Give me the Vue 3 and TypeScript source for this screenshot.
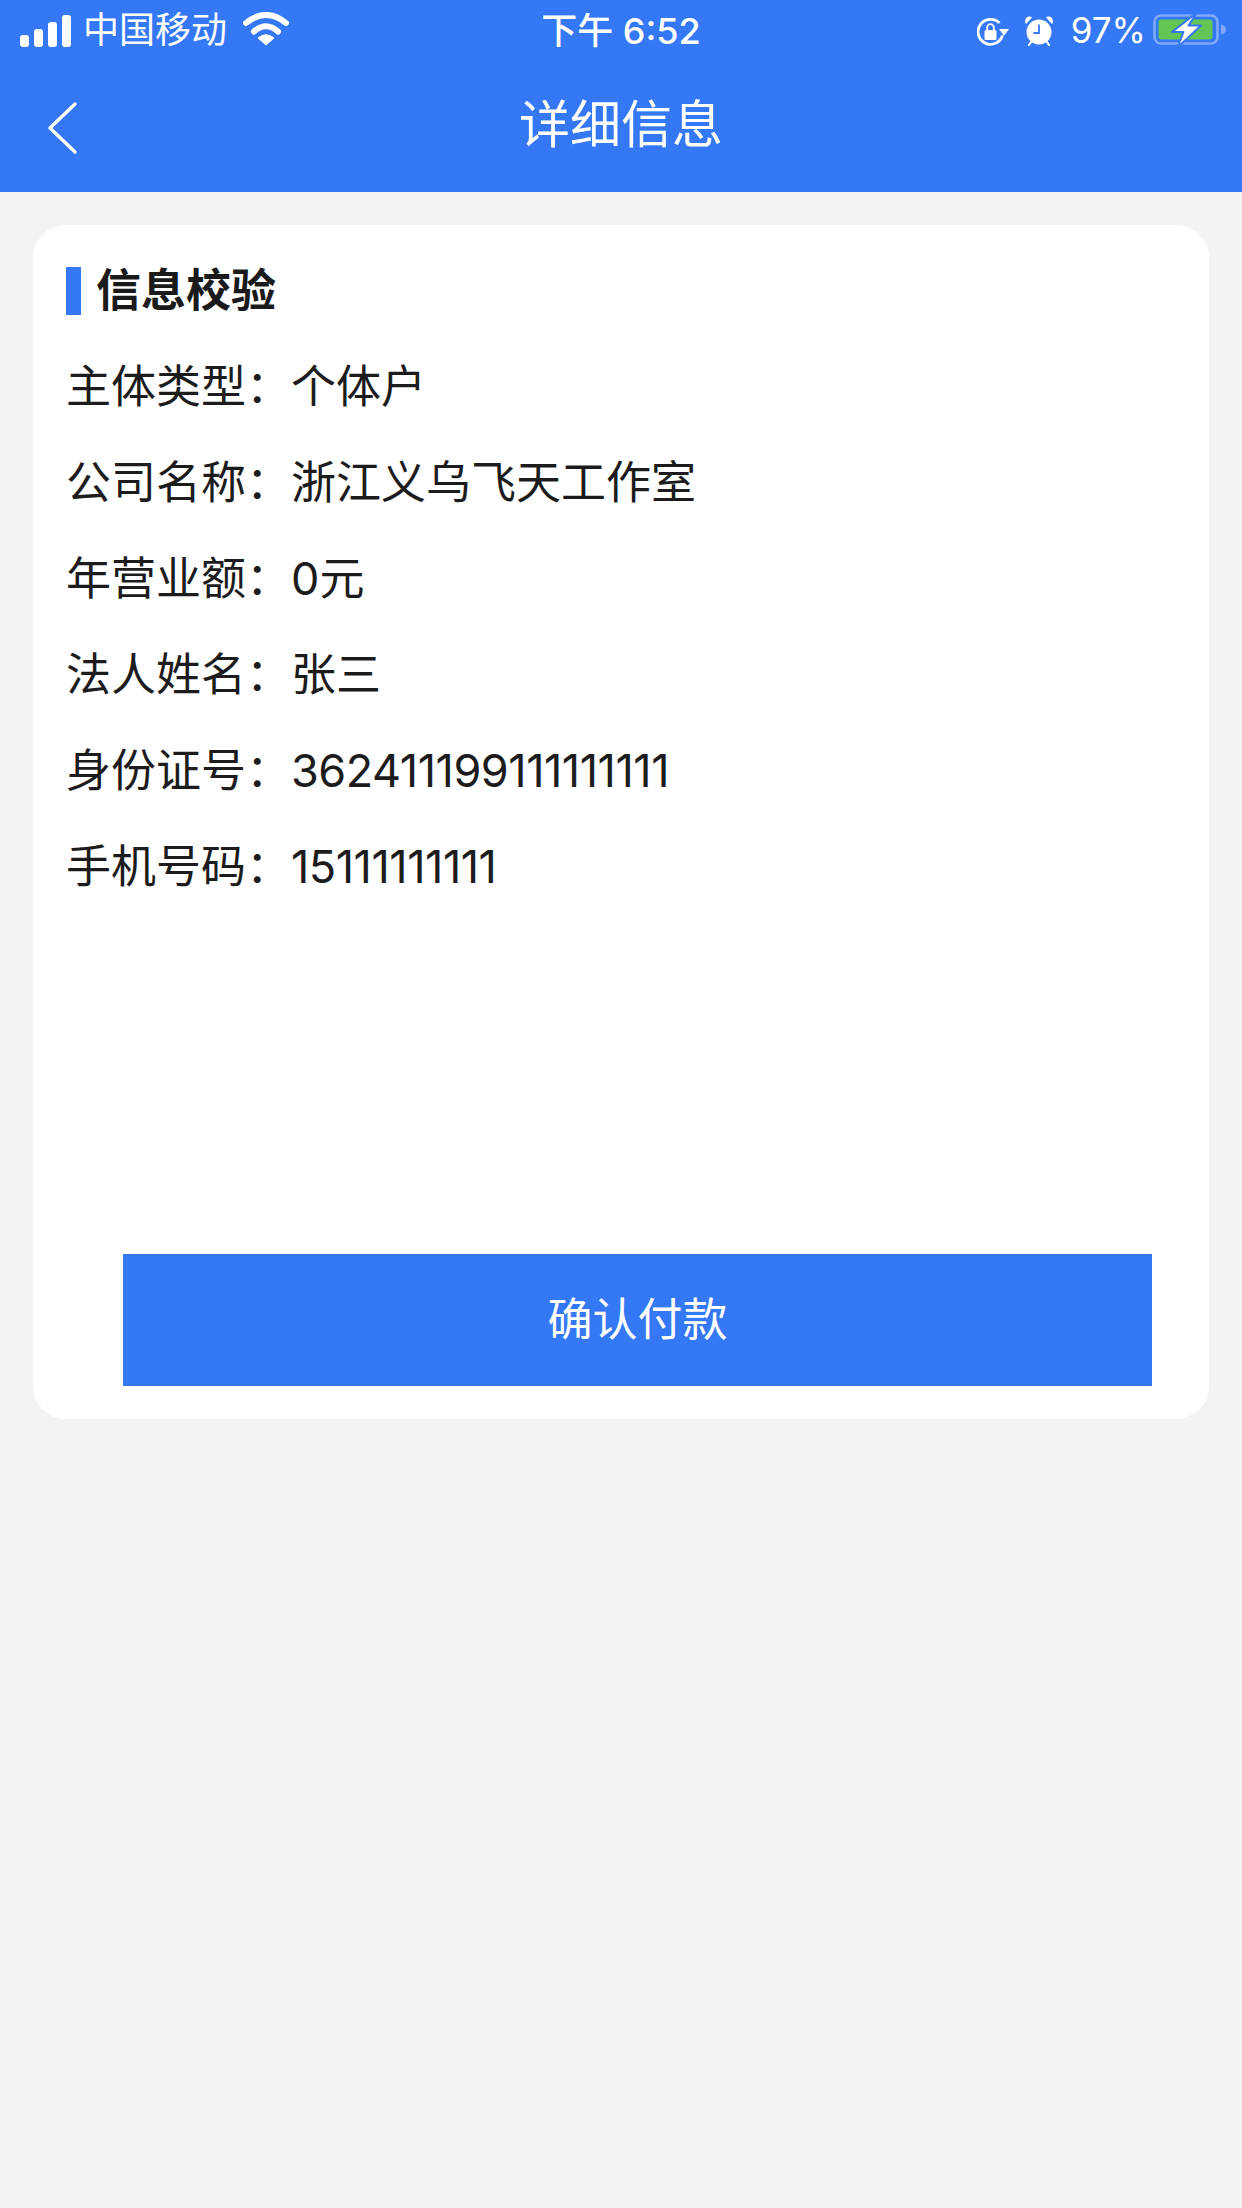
<template>
  <div class="page">
    <header class="top">
      <div class="status-bar">
        <div class="status-left">
          <div class="signal">
            <i v-for="h in signalBars" :key="h" :style="{ height: h + 'px' }"></i>
          </div>
          <span class="carrier">中国移动</span>
          <svg class="wifi" width="46" height="34" viewBox="0 0 46 34">
            <path d="M3 11 Q23 -5 43 11" fill="none" stroke="#fff" stroke-width="6" stroke-linecap="round" />
            <path d="M11 19.5 Q23 9 35 19.5" fill="none" stroke="#fff" stroke-width="6" stroke-linecap="round" />
            <path d="M23 33 L15 26 Q23 19.5 31 26 Z" fill="#fff" stroke="#fff" stroke-width="1" stroke-linejoin="round" />
          </svg>
        </div>
        <div class="status-time">下午 6:52</div>
        <div class="status-right">
          <svg class="lock" width="32" height="28" viewBox="0 0 32 28">
            <path d="M22.5 5 A12.5 12.5 0 1 0 25.5 17.5" fill="none" stroke="#fff" stroke-width="2.8" />
            <path d="M22 11 L32 11 L27 18 Z" fill="#fff" />
            <rect x="7.5" y="12" width="12" height="10" rx="1.5" fill="#fff" />
            <path d="M10.2 12 V9.5 A3.3 3.3 0 0 1 16.8 9.5 V12" fill="none" stroke="#fff" stroke-width="1.8" />
          </svg>
          <svg class="alarm" width="28" height="30" viewBox="0 0 28 30">
            <circle cx="14" cy="16" r="12.5" fill="#fff" />
            <path d="M1 7 L6 1.5 Q1.5 0.5 1 4 Z M27 7 L22 1.5 Q26.5 0.5 27 4 Z" fill="#fff" stroke="#fff" stroke-width="1.5" stroke-linejoin="round" />
            <path d="M6 26 L4 29 M22 26 L24 29" stroke="#fff" stroke-width="2.2" stroke-linecap="round" />
            <path d="M14 8.5 V17 H8.5" fill="none" stroke="#3578f6" stroke-width="1.8" />
          </svg>
          <span class="percent">97%</span>
          <svg class="battery" width="74" height="36" viewBox="0 0 74 36">
            <rect x="1.5" y="3.5" width="63" height="28" rx="6.5" fill="none" stroke="#7fa8f8" stroke-width="2.6" />
            <rect x="5.5" y="7.5" width="54" height="20" rx="3" fill="#62c554" />
            <path d="M68 12.5 Q73 13.5 73 17.5 Q73 21.5 68 22.5 Z" fill="#7fa8f8" />
            <path d="M44 0.5 L19 20 H30.5 L24.5 35.5 L48 13.5 H35.5 Z" fill="#fff" stroke="#3578f6" stroke-width="2" stroke-linejoin="round" />
          </svg>
        </div>
      </div>
      <div class="nav-bar">
        <svg class="back" width="34" height="54" viewBox="0 0 34 54">
          <path d="M30 3 L5 27 L30 51" fill="none" stroke="#fff" stroke-width="3.4" stroke-linecap="round" stroke-linejoin="round" />
        </svg>
        <h1 class="nav-title">详细信息</h1>
      </div>
    </header>

    <main class="content">
      <section class="card">
        <h2 class="card-title">信息校验</h2>
        <dl class="info-list">
          <div v-for="row in rows" :key="row.label" class="info-row">
            <dt>{{ row.label }}：</dt>
            <dd :class="{ 'is-number': row.numeric }">{{ row.value }}</dd>
          </div>
        </dl>
        <button class="confirm" type="button">确认付款</button>
      </section>
    </main>
  </div>
</template>

<script setup lang="ts">
interface InfoRow {
  label: string
  value: string
  numeric?: boolean
}

const signalBars: number[] = [12, 18, 25, 32]

const rows: InfoRow[] = [
  { label: '主体类型', value: '个体户' },
  { label: '公司名称', value: '浙江义乌飞天工作室' },
  { label: '年营业额', value: '0元' },
  { label: '法人姓名', value: '张三' },
  { label: '身份证号', value: '362411199111111111', numeric: true },
  { label: '手机号码', value: '15111111111', numeric: true }
]
</script>

<style>
html,
body {
  margin: 0;
  background: #f3f3f3;
}
</style>

<style scoped>
.page {
  width: 1242px;
  height: 2208px;
  overflow: hidden;
  background: #f3f3f3;
  font-family: Inter, "Noto Sans CJK SC", sans-serif;
  color: #1c1c1c;
}

.top {
  height: 192px;
  background: #3578f6;
  color: #fff;
}

.status-bar {
  position: relative;
  height: 60px;
  display: flex;
  align-items: center;
  justify-content: space-between;
  padding: 0 15px 0 20px;
}

.status-left,
.status-right {
  display: flex;
  align-items: center;
}

.signal {
  display: flex;
  align-items: flex-end;
  gap: 5px;
  height: 32px;
  margin-top: 1px;
}

.signal i {
  width: 9px;
  border-radius: 3px;
  background: #fff;
}

.carrier {
  margin-left: 12px;
  font-size: 36px;
  line-height: 62px;
}

.wifi {
  margin-left: 16px;
  margin-top: -2px;
}

.status-time {
  position: absolute;
  left: 0;
  right: 0;
  top: 0;
  text-align: center;
  font-size: 36px;
  line-height: 62px;
  font-weight: 500;
}

.lock {
  margin-right: 16px;
  margin-top: 4px;
}

.alarm {
  margin-right: 18px;
  margin-top: 1px;
}

.percent {
  font-size: 35px;
  line-height: 62px;
  margin-right: 7px;
}

.nav-bar {
  height: 132px;
  position: relative;
  display: flex;
  align-items: center;
  justify-content: center;
}

.back {
  position: absolute;
  left: 45px;
  top: 41px;
}

.nav-title {
  margin: -2px 0 0;
  font-size: 51px;
  font-weight: 400;
  line-height: 60px;
}

.content {
  padding: 33px;
}

.card {
  height: 1194px;
  box-sizing: border-box;
  padding: 42px 57px 33px 33px;
  background: #fff;
  border-radius: 33px;
  display: flex;
  flex-direction: column;
}

.card-title {
  margin: 0;
  height: 48px;
  border-left: 15px solid #3578f6;
  padding-left: 15px;
  font-size: 45px;
  line-height: 47px;
  font-weight: 700;
  color: #1a1a1a;
}

.info-list {
  margin: 24px 0 0;
  font-size: 45px;
  line-height: 96px;
}

.info-row {
  display: flex;
  height: 96px;
}

.info-row dt {
  width: 225px;
  flex-shrink: 0;
}

.info-row dd {
  margin: 0;
}

.info-row dd.is-number {
  letter-spacing: -0.45px;
}

.confirm {
  margin: auto 0 0 57px;
  width: 1029px;
  height: 132px;
  border: 0;
  border-radius: 0;
  padding: 0 0 8px;
  background: #3578f6;
  color: #fff;
  font-family: inherit;
  font-size: 45px;
}
</style>
